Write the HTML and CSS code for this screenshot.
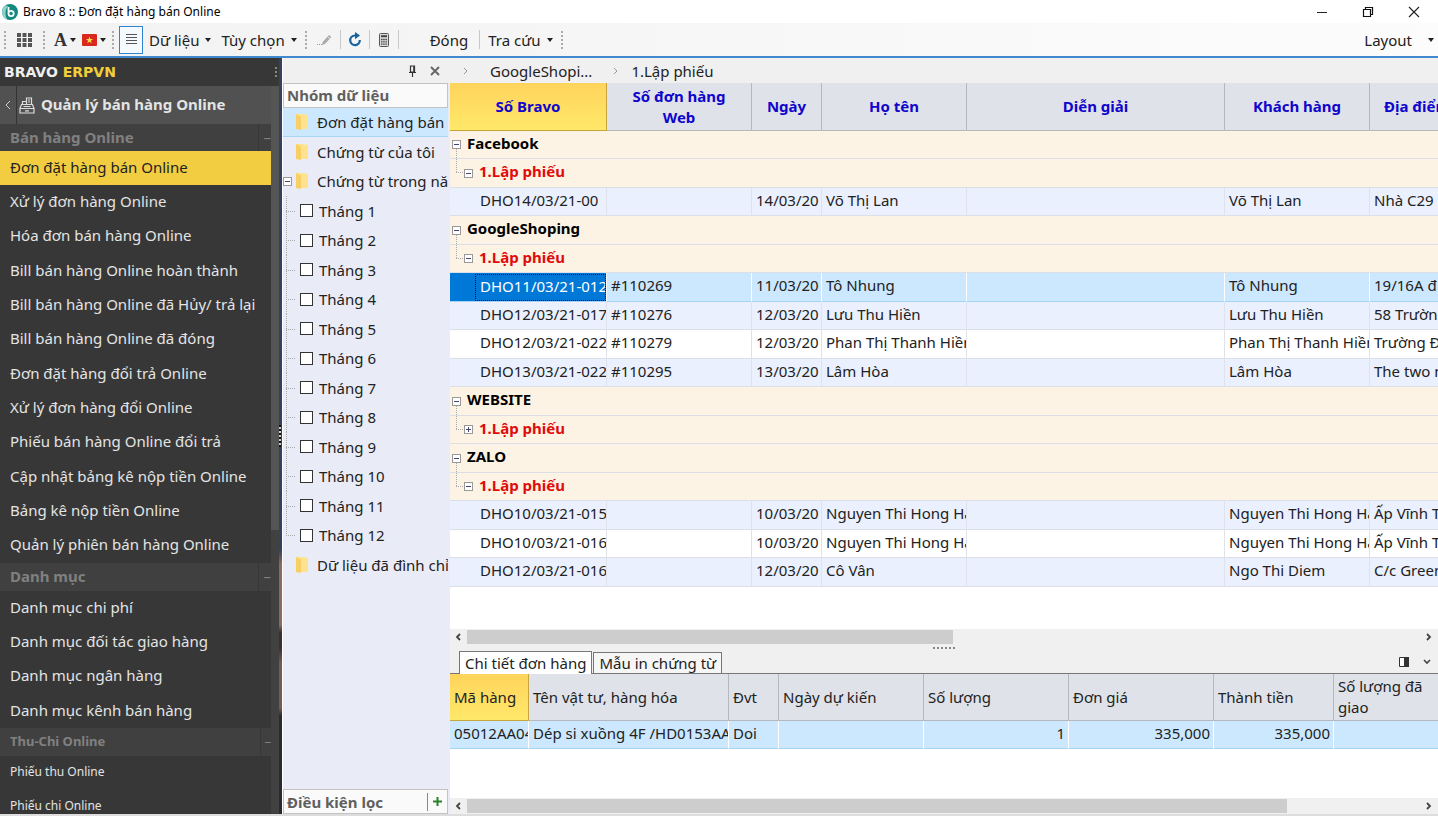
FILE: index.html
```html
<!DOCTYPE html>
<html lang="vi">
<head>
<meta charset="utf-8">
<meta name="viewport" content="width=device-width, initial-scale=1">
<title>Bravo 8 :: Đơn đặt hàng bán Online</title>
<link rel="stylesheet" href="styles.css">
</head>
<body>
<header class="titlebar">
  <svg class="app-logo" width="16" height="16" viewBox="0 0 16 16" aria-hidden="true"><circle cx="8" cy="8" r="8" fill="#12897f"/><path d="M3.500 1.500A8 8 0 0 0 5.500 15.600C2.800 12 2.800 6 6 2z" fill="#8fd0c8"/><path d="M6.500 3v6.500a2.600 2.600 0 1 0 2.600-2.600q-1.500 0-2.500 1.300" fill="none" stroke="#fff" stroke-width="1.800"/></svg>
  <span class="window-title">Bravo 8 :: Đơn đặt hàng bán Online</span>
  <div class="window-controls">
    <button aria-label="Thu nhỏ"><svg width="12" height="12" viewBox="0 0 12 12"><path d="M1 6.500h10" stroke="#222"/></svg></button>
    <button aria-label="Khôi phục"><svg width="12" height="12" viewBox="0 0 12 12" fill="none" stroke="#111" stroke-width="1.200"><path d="M1.500 3.500h7v7h-7zM3.500 3.500v-2h7v7h-2"/></svg></button>
    <button aria-label="Đóng cửa sổ"><svg width="12" height="12" viewBox="0 0 12 12"><path d="M1 1l10 10M11 1L1 11" stroke="#222" stroke-width="1.100"/></svg></button>
  </div>
</header>

<nav class="toolbar" aria-label="Thanh công cụ">
  <span class="grip"></span>
  <button class="tool" aria-label="Phân hệ"><svg width="15" height="14" viewBox="0 0 15 14" fill="#555"><path d="M0 0h4v4H0zM5.500 0h4v4h-4zM11 0h4v4h-4zM0 5h4v4H0zM5.500 5h4v4h-4zM11 5h4v4h-4zM0 10h4v4H0zM5.500 10h4v4h-4zM11 10h4v4h-4z"/></svg></button>
  <span class="grip"></span>
  <button class="tool tool-drop tool-font" aria-label="Phông chữ"><span class="font-letter">A</span><span class="caret"></span></button>
  <button class="tool tool-drop" aria-label="Ngôn ngữ"><svg width="15" height="12" viewBox="0 0 15 12"><rect width="15" height="12" rx="1" fill="#d9281e"/><path d="M7.500 2.500l.9 2.600h2.700L8.900 6.700l.8 2.600-2.200-1.600-2.200 1.600.8-2.600-2.200-1.600h2.700z" fill="#ffd84a"/></svg><span class="caret"></span></button>
  <span class="grip"></span>
  <button class="tool tool-active" aria-label="Danh sách"><svg width="11" height="11" viewBox="0 0 11 11"><path d="M0 .5h11M0 3.500h11M0 6.500h11M0 9.500h11" stroke="#555"/></svg></button>
  <button class="tool tool-text">Dữ liệu<span class="caret"></span></button>
  <button class="tool tool-text">Tùy chọn<span class="caret"></span></button>
  <span class="grip"></span>
  <button class="tool tool-edit" aria-label="Sửa"><svg width="15" height="14" viewBox="0 0 15 14"><path d="M5 12l.7-3L12 2l2.300 2L8 11z" fill="#aaa"/><path d="M10.500 3.500l2.300 2" stroke="#eee"/><path d="M0 11.500h5" stroke="#999" stroke-dasharray="1 1"/></svg></button>
  <span class="separator"></span>
  <button class="tool tool-tight" aria-label="Làm mới"><svg width="14" height="15" viewBox="0 0 14 15"><path d="M8 3.500H6.500a4.800 4.800 0 1 0 5.300 4.500" fill="none" stroke="#17639f" stroke-width="2.200"/><path d="M7 0l5 3.600L7 7.200z" fill="#17639f"/></svg></button>
  <span class="separator"></span>
  <button class="tool tool-calc" aria-label="Máy tính"><svg width="10" height="14" viewBox="0 0 10 14"><rect x=".5" y=".5" width="9" height="13" rx="1" fill="#ddd" stroke="#555"/><path d="M2 3.200h6" stroke="#444" stroke-width="2"/><path d="M2 6.500h6M2 8.800h6M2 11.200h6" stroke="#444" stroke-width="1.300" stroke-dasharray="1.500 .7"/></svg></button>
  <span class="separator"></span>
  <button class="tool tool-close">Đóng</button>
  <span class="separator"></span>
  <button class="tool tool-text tool-lookup">Tra cứu<span class="caret"></span></button>
  <span class="grip"></span>
  <button class="tool tool-layout">Layout<span class="caret"></span></button>
</nav>

<main class="workspace">
  <aside class="sidebar">
    <div class="brand"><span>BRAVO <b>ERPVN</b></span><span class="brand-grip"></span></div>
    <div class="sidebar-body">
      <div class="module">
        <button class="module-back" aria-label="Quay lại"><svg width="6" height="10" viewBox="0 0 6 10"><path d="M5 1L1 5l4 4" fill="none" stroke="#ccc"/></svg></button>
        <svg width="16" height="17" viewBox="0 0 16 17" fill="none" stroke="#ddd" stroke-width="1.200"><path d="M1 11.500h14v4.500H1zM1 11.500l1.500-4h11l1.500 4M3.500 7.500v-3h4v3M7.500 4.500V1h5v6.500M6 13.800h4M4.500 9.500h7M9 3h2M9 5h2"/></svg>
        <h1>Quản lý bán hàng Online</h1>
      </div>
      <h2 class="menu-group">Bán hàng Online<span>–</span></h2>
      <ul class="menu">
        <li><a class="current" href="#">Đơn đặt hàng bán Online</a></li>
        <li><a href="#">Xử lý đơn hàng Online</a></li>
        <li><a href="#">Hóa đơn bán hàng Online</a></li>
        <li><a href="#">Bill bán hàng Online hoàn thành</a></li>
        <li><a href="#">Bill bán hàng Online đã Hủy/ trả lại</a></li>
        <li><a href="#">Bill bán hàng Online đã đóng</a></li>
        <li><a href="#">Đơn đặt hàng đổi trả Online</a></li>
        <li><a href="#">Xử lý đơn hàng đổi Online</a></li>
        <li><a href="#">Phiếu bán hàng Online đổi trả</a></li>
        <li><a href="#">Cập nhật bảng kê nộp tiền Online</a></li>
        <li><a href="#">Bảng kê nộp tiền Online</a></li>
        <li><a href="#">Quản lý phiên bán hàng Online</a></li>
      </ul>
      <h2 class="menu-group">Danh mục<span>–</span></h2>
      <ul class="menu">
        <li><a href="#">Danh mục chi phí</a></li>
        <li><a href="#">Danh mục đối tác giao hàng</a></li>
        <li><a href="#">Danh mục ngân hàng</a></li>
        <li><a href="#">Danh mục kênh bán hàng</a></li>
      </ul>
      <h2 class="menu-group menu-group-small">Thu-Chi Online<span>–</span></h2>
      <ul class="menu menu-small">
        <li><a href="#">Phiếu thu Online</a></li>
        <li><a href="#">Phiếu chi Online</a></li>
      </ul>
    </div>
    <div class="sidebar-scroll"></div>
    <div class="sidebar-edge"><span></span></div>
  </aside>

  <aside class="filter">
    <div class="filter-tools">
      <button aria-label="Ghim"><svg width="9" height="12" viewBox="0 0 9 12"><path d="M2.500 1h4v6h-4zM1 7.500h7M4.500 8v4M5.800 1v6" fill="none" stroke="#333" stroke-width="1.200"/></svg></button>
      <button aria-label="Đóng bảng"><svg width="10" height="10" viewBox="0 0 10 10"><path d="M1 1l8 8M9 1L1 9" stroke="#666" stroke-width="1.900"/></svg></button>
    </div>
    <h2 class="filter-title">Nhóm dữ liệu</h2>
    <ul class="tree">
      <li class="selected"><span class="tree-toggle"></span><svg class="folder" width="13" height="16" viewBox="0 0 13 16"><path d="M1 0h7l5 1v14H1z" fill="#ffe28f"/><path d="M1 0l5 2.500V16l-5-1z" fill="#f8cf65"/></svg><a href="#">Đơn đặt hàng bán Online</a></li>
      <li><span class="tree-toggle"></span><svg class="folder" width="13" height="16" viewBox="0 0 13 16"><path d="M1 0h7l5 1v14H1z" fill="#ffe28f"/><path d="M1 0l5 2.500V16l-5-1z" fill="#f8cf65"/></svg><a href="#">Chứng từ của tôi</a></li>
      <li><span class="tree-toggle"><button class="expander" aria-label="Thu gọn"></button></span><svg class="folder" width="13" height="16" viewBox="0 0 13 16"><path d="M1 0h7l5 1v14H1z" fill="#ffe28f"/><path d="M1 0l5 2.500V16l-5-1z" fill="#f8cf65"/></svg><a href="#">Chứng từ trong năm</a></li>
      <li><span class="twig"></span><label><input type="checkbox">Tháng 1</label></li>
      <li><span class="twig"></span><label><input type="checkbox">Tháng 2</label></li>
      <li><span class="twig"></span><label><input type="checkbox">Tháng 3</label></li>
      <li><span class="twig"></span><label><input type="checkbox">Tháng 4</label></li>
      <li><span class="twig"></span><label><input type="checkbox">Tháng 5</label></li>
      <li><span class="twig"></span><label><input type="checkbox">Tháng 6</label></li>
      <li><span class="twig"></span><label><input type="checkbox">Tháng 7</label></li>
      <li><span class="twig"></span><label><input type="checkbox">Tháng 8</label></li>
      <li><span class="twig"></span><label><input type="checkbox">Tháng 9</label></li>
      <li><span class="twig"></span><label><input type="checkbox">Tháng 10</label></li>
      <li><span class="twig"></span><label><input type="checkbox">Tháng 11</label></li>
      <li><span class="twig twig-last"></span><label><input type="checkbox">Tháng 12</label></li>
      <li><span class="tree-toggle"></span><svg class="folder" width="13" height="16" viewBox="0 0 13 16"><path d="M1 0h7l5 1v14H1z" fill="#ffe28f"/><path d="M1 0l5 2.500V16l-5-1z" fill="#f8cf65"/></svg><a href="#">Dữ liệu đã đình chỉ</a></li>
    </ul>
    <div class="filter-title filter-foot"><h2>Điều kiện lọc</h2><button aria-label="Thêm điều kiện"><svg width="9" height="9" viewBox="0 0 9 9"><path d="M4.500 0v9M0 4.500h9" stroke="#2b812b" stroke-width="2"/></svg></button></div>
  </aside>

  <section class="content">
    <nav class="breadcrumb" aria-label="Đường dẫn">
      <svg width="5" height="8" viewBox="0 0 5 8"><path d="M1 1l3 3-3 3" fill="none" stroke="#999"/></svg>
      <a class="crumb-first" href="#">GoogleShopi...</a>
      <svg width="5" height="8" viewBox="0 0 5 8"><path d="M1 1l3 3-3 3" fill="none" stroke="#999"/></svg>
      <a class="crumb" href="#">1.Lập phiếu</a>
    </nav>

    <div class="grid-wrap">
      <table class="grid orders">
        <colgroup><col class="w-code"><col class="w-name"><col class="w-date"><col class="w-name"><col class="w-note"><col class="w-name"><col></colgroup>
        <thead>
          <tr><th class="sorted">Số Bravo</th><th>Số đơn hàng Web</th><th>Ngày</th><th>Họ tên</th><th>Diễn giải</th><th>Khách hàng</th><th class="cut">Địa điểm</th></tr>
        </thead>
        <tbody>
          <tr class="group"><td colspan="7"><div><button class="expander" aria-label="Thu gọn"></button>Facebook</div></td></tr>
          <tr class="group sub"><td colspan="7"><div><span class="branch"></span><button class="expander" aria-label="Thu gọn"></button>1.Lập phiếu</div></td></tr>
          <tr class="alt"><td>DHO14/03/21-00</td><td></td><td>14/03/20</td><td>Võ Thị Lan</td><td></td><td>Võ Thị Lan</td><td>Nhà C29</td></tr>
          <tr class="group"><td colspan="7"><div><button class="expander" aria-label="Thu gọn"></button>GoogleShoping</div></td></tr>
          <tr class="group sub"><td colspan="7"><div><span class="branch"></span><button class="expander" aria-label="Thu gọn"></button>1.Lập phiếu</div></td></tr>
          <tr class="active"><td class="focus"><span>DHO11/03/21-012</span></td><td>#110269</td><td>11/03/20</td><td>Tô Nhung</td><td></td><td>Tô Nhung</td><td>19/16A đ</td></tr>
          <tr class="alt"><td>DHO12/03/21-017</td><td>#110276</td><td>12/03/20</td><td>Lưu Thu Hiền</td><td></td><td>Lưu Thu Hiền</td><td>58 Trườn</td></tr>
          <tr><td>DHO12/03/21-022</td><td>#110279</td><td>12/03/20</td><td>Phan Thị Thanh Hiền</td><td></td><td>Phan Thị Thanh Hiền</td><td>Trường Đ</td></tr>
          <tr class="alt"><td>DHO13/03/21-022</td><td>#110295</td><td>13/03/20</td><td>Lâm Hòa</td><td></td><td>Lâm Hòa</td><td>The two m</td></tr>
          <tr class="group"><td colspan="7"><div><button class="expander" aria-label="Thu gọn"></button>WEBSITE</div></td></tr>
          <tr class="group sub"><td colspan="7"><div><span class="branch"></span><button class="expander closed" aria-label="Mở rộng"></button>1.Lập phiếu</div></td></tr>
          <tr class="group"><td colspan="7"><div><button class="expander" aria-label="Thu gọn"></button>ZALO</div></td></tr>
          <tr class="group sub"><td colspan="7"><div><span class="branch"></span><button class="expander" aria-label="Thu gọn"></button>1.Lập phiếu</div></td></tr>
          <tr class="alt"><td>DHO10/03/21-015</td><td></td><td>10/03/20</td><td>Nguyen Thi Hong Ha</td><td></td><td>Nguyen Thi Hong Ha</td><td>Ấp Vĩnh T</td></tr>
          <tr><td>DHO10/03/21-016</td><td></td><td>10/03/20</td><td>Nguyen Thi Hong Ha</td><td></td><td>Nguyen Thi Hong Ha</td><td>Ấp Vĩnh T</td></tr>
          <tr class="alt"><td>DHO12/03/21-016</td><td></td><td>12/03/20</td><td>Cô Vân</td><td></td><td>Ngo Thi Diem</td><td>C/c Green</td></tr>
        </tbody>
      </table>
    </div>

    <div class="scrollbar">
      <svg width="6" height="8" viewBox="0 0 6 8"><path d="M5 1L2 4l3 3" fill="none" stroke="#444" stroke-width="1.800"/></svg>
      <div class="track"><div class="thumb thumb-half"></div></div>
      <svg width="6" height="8" viewBox="0 0 6 8"><path d="M1 1l3 3-3 3" fill="none" stroke="#444" stroke-width="1.800"/></svg>
    </div>
    <div class="splitter"><span></span></div>

    <div class="tabs">
      <button class="tab tab-current">Chi tiết đơn hàng</button>
      <button class="tab">Mẫu in chứng từ</button>
      <div class="tab-tools">
        <button aria-label="Bố cục"><svg width="10" height="10" viewBox="0 0 10 10"><path d="M.5.5h9v9h-9z" fill="#fff" stroke="#333"/><path d="M5 0h5v10H5z" fill="#333"/></svg></button>
        <button aria-label="Thu gọn chi tiết"><svg width="8" height="6" viewBox="0 0 8 6"><path d="M1 1l3 3 3-3" fill="none" stroke="#444" stroke-width="1.600"/></svg></button>
      </div>
    </div>

    <div class="detail-wrap">
      <table class="grid details">
        <colgroup><col class="w-item"><col class="w-desc"><col class="w-unit"><col class="w-name"><col class="w-name"><col class="w-name"><col class="w-sum"><col></colgroup>
        <thead>
          <tr><th class="sorted">Mã hàng</th><th>Tên vật tư, hàng hóa</th><th>Đvt</th><th>Ngày dự kiến</th><th>Số lượng</th><th>Đơn giá</th><th>Thành tiền</th><th>Số lượng đã giao</th></tr>
        </thead>
        <tbody>
          <tr class="active"><td>05012AA04</td><td>Dép si xuồng 4F /HD0153AA</td><td>Doi</td><td></td><td class="num">1</td><td class="num">335,000</td><td class="num">335,000</td><td></td></tr>
        </tbody>
      </table>
    </div>
    <div class="scrollbar">
      <svg width="6" height="8" viewBox="0 0 6 8"><path d="M5 1L2 4l3 3" fill="none" stroke="#444" stroke-width="1.800"/></svg>
      <div class="track"><div class="thumb thumb-wide"></div></div>
      <svg width="6" height="8" viewBox="0 0 6 8"><path d="M1 1l3 3-3 3" fill="none" stroke="#444" stroke-width="1.800"/></svg>
    </div>
  </section>
</main>
</body>
</html>
```
FILE: styles.css
```css
* { box-sizing: border-box; }

body {
  margin: 0;
  height: 100vh;
  display: flex;
  flex-direction: column;
  font: 15px/20px "Noto Sans", "Open Sans", sans-serif;
  color: #222;
  background: #f0f0f0;
  overflow: hidden;
}

button { font: inherit; color: inherit; background: none; border: 0; padding: 0; display: inline-flex; align-items: center; justify-content: center; }
a { color: inherit; text-decoration: none; }
ul { list-style: none; margin: 0; padding: 0; }
h1, h2 { margin: 0; font-size: inherit; }
svg { flex: none; }

/* Title bar */
.titlebar { display: flex; align-items: center; flex: none; height: 23px; padding: 0 18px 0 2px; gap: 5px; background: #fff; font-size: 12px; color: #000; }
.window-controls { margin-left: auto; display: flex; gap: 34px; }
.window-controls button { width: 12px; height: 20px; }

/* Toolbar */
.toolbar { display: flex; align-items: center; flex: none; height: 35px; padding: 0 4px; border-bottom: 2px solid #4089cf; background: linear-gradient(90deg, #f2f2f2, #fcfcfc); }
.grip { width: 2px; height: 18px; background: repeating-linear-gradient(#aaa 0 2px, transparent 2px 4px); flex: none; }
.separator { width: 1px; height: 19px; background: #c8c8c8; flex: none; }
.tool { height: 28px; padding: 0 11px; white-space: nowrap; }
.tool-drop { padding: 0 6px 0 0; gap: 3px; }
.tool-font { padding-left: 9px; }
.tool-edit { padding: 0 8px 0 10px; }
.tool-tight { padding: 0 7px; }
.tool-calc { padding: 0 9px; }
.tool-active { width: 24px; margin-left: 5px; padding: 0; border: 1px solid #2f84cd; background: #f4f9fd; }
.tool-text { padding: 0 4px 0 6px; gap: 6px; }
.tool-text + .grip { margin-left: 4px; }
.tool-close { padding: 0 11px 0 31px; }
.tool-lookup { padding-left: 8px; }
.font-letter { font: bold 18px/20px "Liberation Serif", serif; color: #333; }
.caret { border: 3px solid transparent; border-top: 4px solid #222; border-bottom: 0; }
.tool-layout { margin-left: auto; padding: 0; gap: 16px; }

.workspace { flex: 1; display: flex; min-height: 0; border-bottom: 2px solid #ddd; }

/* Sidebar */
.sidebar { width: 282px; flex: none; display: grid; grid-template-columns: 1fr 8px 3px; grid-template-rows: 28px minmax(0, 1fr); background: #373737; color: #e4e4e4; }
.brand { grid-column: 1 / 3; display: flex; align-items: center; justify-content: space-between; padding: 0 2px 0 4px; font: bold 14px/20px "DejaVu Sans", sans-serif; color: #f0f0f0; }
.brand b { color: #f2cf3a; }
.brand-grip { width: 2px; height: 10px; background: repeating-linear-gradient(#888 0 2px, transparent 2px 4px); }
.sidebar-body { grid-column: 1; min-width: 0; overflow: hidden; }
.sidebar-scroll { background: linear-gradient(#555 0 444px, #414141 444px); }
.sidebar-edge { grid-column: 3; grid-row: 1 / 3; display: flex; align-items: center; background: linear-gradient(#34425f 0 65%, #8b6a60 67% 75%, #3a3030 76% 78%, #755b54 80% 86%, #2a2a30 87%); }
.sidebar-edge span { width: 2px; height: 22px; background: repeating-linear-gradient(#111 0 2px, #ccc 2px 4px); }
.module { display: flex; align-items: center; height: 38px; background: #515151; }
.module h1 { padding: 0 0 2px 6px; white-space: nowrap; }
.module-back { width: 17px; height: 38px; border-right: 1px solid #333; margin-right: 2px; }
.menu-group { display: flex; height: 28px; line-height: 26px; padding-left: 10px; background: #404040; color: #808080; }
.menu-group span { margin-left: auto; padding-left: 4px; border-left: 1px solid #373737; font-weight: normal; }
.sidebar-body .module + .menu-group { height: 27px; }
.menu li { height: 34px; }
.menu li:nth-child(3n) { height: 35px; }
.menu a { display: block; height: 34px; line-height: 32px; padding-left: 10px; white-space: nowrap; }
.menu .current { background: #f2cd42; color: #222; }
.menu-group-small { font-size: 13px; }
.menu-small { font-size: 12px; }

/* Filter panel */
.filter { width: 168px; flex: none; display: flex; flex-direction: column; padding-right: 2px; border-left: 1px solid #fff; background: #e9ecf6; }
.filter-tools { display: flex; justify-content: flex-end; align-items: center; flex: none; gap: 13px; height: 25px; padding-right: 10px; margin-right: -2px; background: #f0f0f0; }
.filter-title { flex: none; height: 25px; line-height: 22px; padding-left: 3px; border: 1px solid #c3c3c3; background: #fafafa; color: #606060; font-weight: bold; }
.tree { flex: 1; overflow: hidden; }
.tree li { display: flex; align-items: center; height: 29px; padding-bottom: 1px; }
.tree li:nth-child(even) { height: 30px; }
.tree .selected { background: #cce8ff; border-bottom: 1px solid #a6d4f5; padding-bottom: 0; }
.tree a { flex: 1; min-width: 0; overflow: hidden; white-space: nowrap; margin-left: 9px; }
.tree label { display: flex; align-items: center; gap: 6px; }
.tree input { appearance: none; width: 13px; height: 13px; margin: 0; border: 1px solid #333; background: #fff; }
.tree-toggle { width: 12px; flex: none; display: flex; }
.twig { align-self: stretch; width: 9px; margin: 0 5px -1px 3px; background: repeating-linear-gradient(90deg, #aaa 0 1px, transparent 1px 2px) 0 50% / 100% 1px no-repeat, repeating-linear-gradient(#aaa 0 1px, transparent 1px 2px) 0 0 / 1px 100% no-repeat; }
.twig-last { background-size: 100% 1px, 1px 50%; }
.filter-foot { display: flex; align-items: center; }
.filter-foot button { margin-left: auto; width: 20px; height: 18px; border-left: 1px solid #888; }

.expander { width: 9px; height: 9px; flex: none; border: 1px solid #999; background: linear-gradient(#447, #447) center / 5px 1px no-repeat, #fff; }
.expander.closed { background: linear-gradient(#447, #447) center / 5px 1px no-repeat, linear-gradient(#447, #447) center / 1px 5px no-repeat, #fff; }

/* Content */
.content { flex: 1; min-width: 0; display: flex; flex-direction: column; }
.breadcrumb { display: flex; align-items: center; flex: none; height: 25px; padding-left: 13px; }
.crumb-first { padding: 0 21px 0 22px; }
.crumb { padding-left: 13px; }
.grid-wrap { flex: 1; min-height: 0; overflow: hidden; background: #fff; }
.grid { width: 100%; table-layout: fixed; border-collapse: separate; border-spacing: 0; }
.w-code { width: 157px; }
.w-name { width: 145px; }
.w-date { width: 70px; }
.w-note { width: 258px; }
.w-item { width: 79px; }
.w-desc { width: 200px; }
.w-unit { width: 50px; }
.w-sum { width: 120px; }
.grid th { height: 48px; padding: 0 12px; line-height: 21px; background: #dfe2e8; border-right: 1px solid #b5b8be; border-bottom: 1px solid #b5b8be; }
.grid .sorted { background: linear-gradient(#ffd45c, #ffe869); border-color: #c9a53d; }
.grid td { height: 28px; padding: 0 0 4px 4px; border-right: 1px solid #dfe2ea; border-bottom: 1px solid #dcdfe6; white-space: nowrap; overflow: hidden; }
.orders th { color: #0f05cc; }
.orders .cut { text-align: left; padding: 0 0 0 14px; white-space: nowrap; overflow: hidden; }
.grid tr > :last-child { border-right: 0; }
.orders tbody tr:nth-child(even) td { height: 29px; }
.orders td:first-child { padding-left: 30px; }
.alt td { background: #eaf0fd; }
.grid .active td { background: #cce8ff; border-right-color: #fff; border-bottom-color: #a6d4f5; }
.grid .active .focus { background: #0078d7; color: #fff; padding: 0 0 0 25px; }
.focus span { display: block; height: 27px; line-height: 22px; padding-left: 4px; border: 1px dotted #012; overflow: hidden; }
.orders .group td { padding: 0 0 4px 2px; background: #fcf3e4; color: #000; font-weight: bold; overflow: visible; }
.group div { display: flex; align-items: center; height: 20px; gap: 6px; }
.group .expander { margin-top: 4px; }
.orders .group.sub td { color: #e00b0b; }
.branch { width: 7px; height: 24px; margin: -20px -5px 0 4px; background: repeating-linear-gradient(90deg, #aaa 0 1px, transparent 1px 2px) 0 100% / 100% 1px no-repeat, repeating-linear-gradient(#aaa 0 1px, transparent 1px 2px) 0 0 / 1px 100% no-repeat; }

.scrollbar { display: flex; align-items: center; flex: none; height: 16px; padding: 0 6px 0 5px; gap: 6px; background: #f0f0f0; }
.track { flex: 1; height: 14px; }
.thumb { height: 100%; background: #cdcdcd; }
.thumb-half { width: 51%; }
.thumb-wide { width: 86%; }
.splitter { display: flex; justify-content: center; flex: none; height: 6px; padding-top: 2px; }
.splitter span { width: 23px; height: 2px; background: repeating-linear-gradient(90deg, #888 0 2px, transparent 2px 4px); }

.tabs { display: flex; align-items: flex-end; flex: none; height: 23px; padding: 0 7px 0 9px; border-bottom: 1px solid #777; }
.tab { height: 21px; padding: 0 5px; border: 1px solid #777; border-bottom: 0; margin-left: 1px; white-space: nowrap; background: #f6f6f6; }
.tab-current { height: 23px; margin: 0 0 -1px; background: #fff; }
.tab-tools { margin-left: auto; align-self: center; display: flex; gap: 14px; }
.detail-wrap { flex: none; height: 124px; overflow: hidden; background: #fff; }
.grid.details th { font-weight: normal; text-align: left; height: 47px; padding: 0 4px; }
.grid .num { text-align: right; padding-right: 3px; }
```
